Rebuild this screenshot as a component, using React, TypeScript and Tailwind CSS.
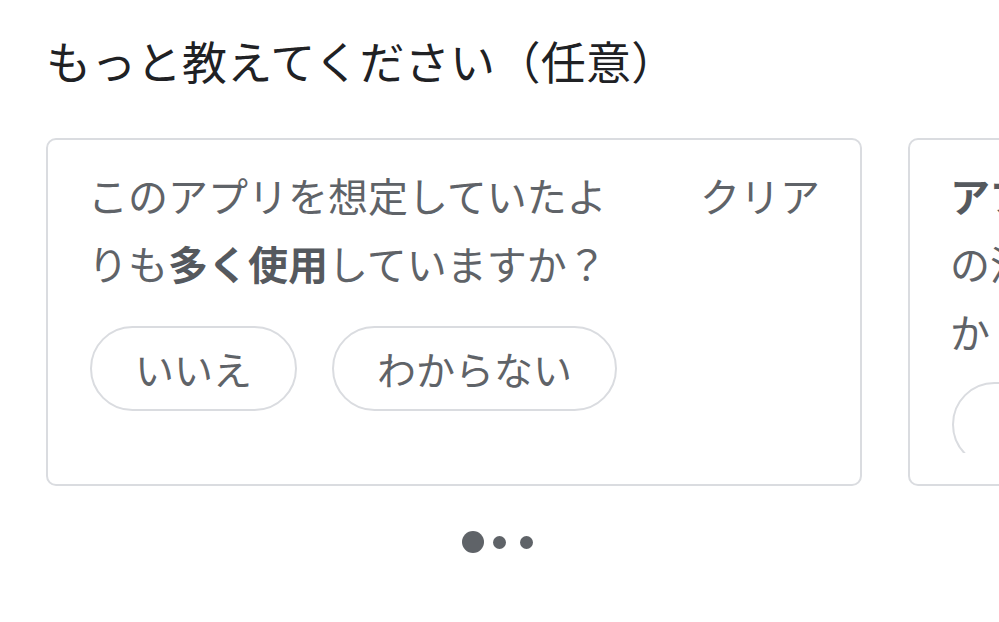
import React from "react";

const font = { fontFamily: '"Noto Sans CJK JP", "Noto Sans", sans-serif' };

interface CardProps {
  children: React.ReactNode;
  options: string[];
  gap?: string;
}

const QuestionCard: React.FC<CardProps> = ({ children, options, gap = "mt-[29px]" }) => {
  return (
    <div className="flex h-[348px] w-[816px] shrink-0 flex-col rounded-[10px] border-2 border-[#dadce0] px-[40px] pt-[21px] pb-[31px]">
      <div className="min-h-0 flex-1 overflow-hidden">
        <div className="flex items-start justify-between">
          <p className="w-[530px] text-[40px] leading-[68px] text-[#5f6368]">{children}</p>
          <button className="text-[40px] leading-[68px] text-[#5f6368]">クリア</button>
        </div>
        <div className={`${gap} flex gap-[35px] pl-[2px]`}>
          {options.map((o) => (
            <button
              key={o}
              className="h-[85px] shrink-0 rounded-full border-2 border-[#dadce0] px-[43px] text-[39px] text-[#5f6368]"
            >
              {o}
            </button>
          ))}
        </div>
      </div>
    </div>
  );
};

export default function App() {
  return (
    <div className="h-[622px] w-[999px] overflow-hidden bg-white" style={font}>
      <h1 className="pl-[46px] pt-[31px] text-[45px] leading-[60px] font-normal tracking-[0.3px] text-[#202124]">
        もっと教えてください（任意）
      </h1>
      <div className="mt-[47px] flex gap-[46px] pl-[46px]">
        <QuestionCard options={["いいえ", "わからない"]}>
          このアプリを想定していたよりも<b className="font-bold text-[#55595e]">多く使用</b>していますか？
        </QuestionCard>
        <QuestionCard options={["はい", "いいえ", "わからない"]} gap="mt-[17px]">
          <b className="font-bold text-[#55595e]">アプリの使用量を減らす方法</b>の活用に興味を持っていますか？
        </QuestionCard>
      </div>
      <div className="mt-[45px] flex items-center justify-center">
        <span className="flex w-[27px] justify-center">
          <span className="size-[22px] rounded-full bg-[#5f6368]" />
        </span>
        <span className="flex w-[27px] justify-center">
          <span className="size-[13px] rounded-full bg-[#5f6368]" />
        </span>
        <span className="flex w-[27px] justify-center">
          <span className="size-[13px] rounded-full bg-[#5f6368]" />
        </span>
      </div>
    </div>
  );
}
